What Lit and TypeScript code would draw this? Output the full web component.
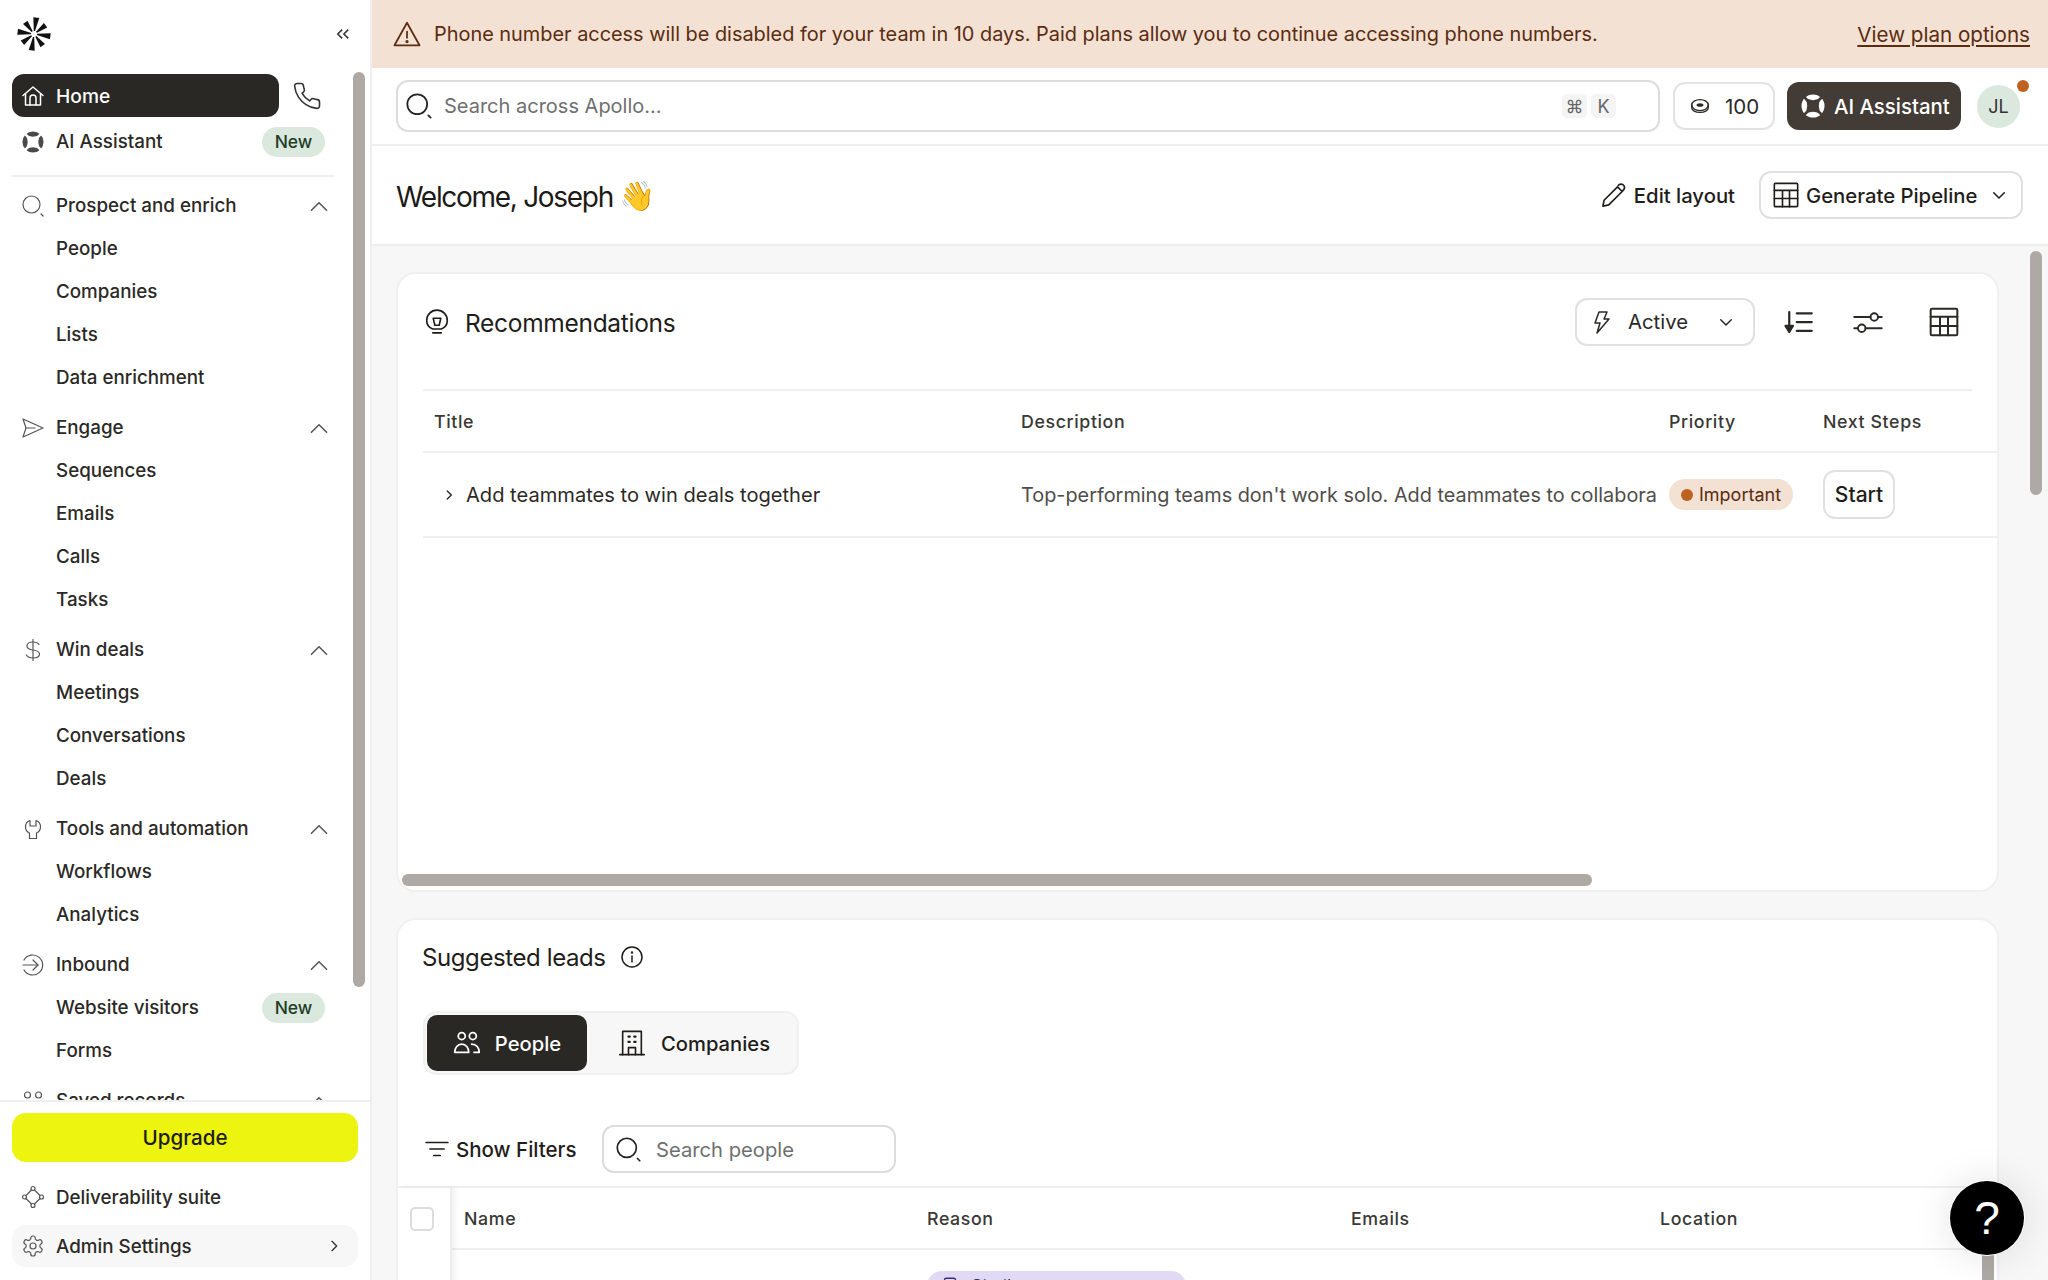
import { LitElement, html, css, svg } from "lit";
import { customElement } from "lit/decorators.js";

const ic = (size: number, body: unknown, sw = 1.5) => html`<svg class="ic" width=${size} height=${size} viewBox="0 0 24 24" fill="none" stroke="currentColor" stroke-width=${sw} stroke-linecap="round" stroke-linejoin="round">${body}</svg>`;

const I = {
  home: svg`<path d="M2 11.500 12 3l10 8.500"/><path d="M4.500 10v11h15V10"/><path d="M9 21v-7a3 3 0 0 1 6 0v7"/>`,
  phone: svg`<path d="M22 16.920v3a2 2 0 0 1-2.180 2 19.790 19.790 0 0 1-8.630-3.070 19.500 19.500 0 0 1-6-6 19.790 19.790 0 0 1-3.070-8.670A2 2 0 0 1 4.110 2h3a2 2 0 0 1 2 1.720 12.840 12.840 0 0 0 .7 2.810 2 2 0 0 1-.45 2.110L8.090 9.910a16 16 0 0 0 6 6l1.270-1.270a2 2 0 0 1 2.110-.45 12.840 12.840 0 0 0 2.810.7A2 2 0 0 1 22 16.920z"/>`,
  search: svg`<circle cx="10.500" cy="10.500" r="8.500"/><path d="M20 20l2 2"/>`,
  send: svg`<path d="M2 3l20 9-20 9 3-9z"/><path d="M5 12h9"/>`,
  dollar: svg`<path d="M12 1.500v21"/><path d="M18 6.500c-1-1.500-3-2.500-6-2.500-3.500 0-6 1.500-6 4s2.500 3.500 6 4 6.500 1.500 6.500 4-2.500 4-6.500 4c-3 0-5.500-1-6.500-3"/>`,
  tool: svg`<path d="M9 3.500C6 4.500 4.500 7 4.500 10c0 3 1.500 5 4 6v5.500h7V16c2.500-1 4-3 4-6 0-3-1.500-5.500-4.500-6.500V9H9z"/>`,
  inbound: svg`<path d="M3 7a10 10 0 1 1 0 10"/><path d="M2 12h15"/><path d="M12 7l5 5-5 5"/>`,
  saved: svg`<circle cx="6.500" cy="6" r="3"/><circle cx="17.500" cy="6" r="3"/>`,
  up: svg`<path d="M5 16l7-7 7 7"/>`,
  down: svg`<path d="M5 9l7 7 7-7"/>`,
  right: svg`<path d="M9 5l7 7-7 7"/>`,
  warn: svg`<path d="M12 3 2 21h20z"/><path d="M12 10v5"/><circle cx="12" cy="18" r=".6" fill="currentColor"/>`,
  coin: svg`<ellipse cx="12" cy="11" rx="9" ry="6"/><path d="M3 11v3c0 3 4 5 9 5s9-2 9-5v-3"/><ellipse cx="12" cy="11" rx="3" ry="1.200" fill="currentColor"/>`,
  pencil: svg`<path d="M2.500 21.500l1-5L15 5l4 4L7.500 20.500z"/><path d="M15.500 4a3 3 0 0 1 5 0c1 1.500 .5 3-1 4.500"/>`,
  table: svg`<rect x="2" y="2" width="20" height="20" rx="1"/><path d="M2 8h20M2 15h20M9 8v14M15 8v14"/>`,
  bolt: svg`<path d="M9 2h8l-3 7h5L7 23l3-10H5z"/>`,
  sort: svg`<path d="M5 4v15"/><path d="M2 15l3 5 3-5z" fill="currentColor"/><path d="M11 5h12M11 12h12M11 19h12"/>`,
  sliders: svg`<path d="M1 8h13M20 8h3M1 17h3M10 17h13"/><circle cx="17" cy="8" r="3"/><circle cx="7" cy="17" r="3"/>`,
  bulb: svg`<path d="M8 18.500C4.500 17 2.500 14 2.500 10.500a9.500 9.500 0 0 1 19 0c0 3.500-2 6.500-5.500 8z"/><path d="M8.500 8.500h7L14 15h-4z"/><path d="M8 22h8"/>`,
  info: svg`<circle cx="12" cy="12" r="10"/><path d="M12 11v6"/><circle cx="12" cy="7.500" r=".5" fill="currentColor"/>`,
  people: svg`<circle cx="7.500" cy="6" r="3"/><circle cx="17" cy="6" r="3"/><path d="M1.500 20c0-4 2.500-7 6-7s6 3 6 7z"/><path d="M16 13c4 0 6.500 3 6.500 7H18"/>`,
  building: svg`<path d="M4 22V2h16v20"/><path d="M1.500 22h21"/><path d="M9 22v-6h6v6"/><path d="M9 6.500h1M14 6.500h1M9 11h1M14 11h1" stroke-width="2"/>`,
  filter: svg`<path d="M2 6h20M5.500 12h13M9 18h6"/>`,
  deliver: svg`<circle cx="12" cy="3.500" r="2"/><circle cx="3.500" cy="12" r="2"/><circle cx="20.500" cy="12" r="2"/><circle cx="12" cy="20.500" r="2"/><path d="M10.500 5 5 10.500M13.500 5l5.500 5.500M5 13.500l5.500 5.500M19 13.500 13.500 19"/>`,
  gear: svg`<circle cx="12" cy="12" r="3"/><path d="M12.220 2h-.44a2 2 0 0 0-2 2v.18a2 2 0 0 1-1 1.730l-.43.25a2 2 0 0 1-2 0l-.15-.08a2 2 0 0 0-2.730.73l-.22.38a2 2 0 0 0 .73 2.730l.15.1a2 2 0 0 1 1 1.720v.51a2 2 0 0 1-1 1.740l-.15.09a2 2 0 0 0-.73 2.730l.22.38a2 2 0 0 0 2.730.73l.15-.08a2 2 0 0 1 2 0l.43.25a2 2 0 0 1 1 1.730V20a2 2 0 0 0 2 2h.44a2 2 0 0 0 2-2v-.18a2 2 0 0 1 1-1.730l.43-.25a2 2 0 0 1 2 0l.15.08a2 2 0 0 0 2.730-.73l.22-.39a2 2 0 0 0-.73-2.730l-.15-.08a2 2 0 0 1-1-1.740v-.5a2 2 0 0 1 1-1.740l.15-.09a2 2 0 0 0 .73-2.730l-.22-.38a2 2 0 0 0-2.730-.73l-.15.08a2 2 0 0 1-2 0l-.43-.25a2 2 0 0 1-1-1.730V4a2 2 0 0 0-2-2z"/>`,
  badge: svg`<rect x="3" y="9" width="18" height="12" rx="2.500"/><path d="M6 9V5.500a2 2 0 0 1 2-2h8a2 2 0 0 1 2 2V9"/>`,
};

const ball = (size: number, color: string, bg: string) => html`<svg class="ic" width=${size} height=${size} viewBox="0 0 24 24">
  <circle cx="12" cy="12" r="11.500" fill=${color}/>
  <path d="M3 3 Q12 9.500 21 3 Q14.500 12 21 21 Q12 14.500 3 21 Q9.500 12 3 3Z" fill=${bg}/>
  <path d="M1 1 23 23M23 1 1 23" stroke=${bg} stroke-width="2.600"/>
</svg>`;

const logo = html`<svg class="ic" width="34" height="34" viewBox="0 0 34 34" fill="#111" stroke="none">
  ${[0, 45, 90, 135, 180, 225, 270, 315].map((a, i) => svg`<path transform="rotate(${a + 8} 17 17)" d=${i % 2 ? "M16.400 14 L14.200 2.500 L19.800 2.500 L17.600 14 Z" : "M16.400 14 L14 0.500 L20 0.500 L17.600 14 Z"}/>`)}
</svg>`;

type Sec = { icon: unknown; label: string; items: { t: string; badge?: boolean }[] };
const secs: Sec[] = [
  { icon: I.search, label: "Prospect and enrich", items: [{ t: "People" }, { t: "Companies" }, { t: "Lists" }, { t: "Data enrichment" }] },
  { icon: I.send, label: "Engage", items: [{ t: "Sequences" }, { t: "Emails" }, { t: "Calls" }, { t: "Tasks" }] },
  { icon: I.dollar, label: "Win deals", items: [{ t: "Meetings" }, { t: "Conversations" }, { t: "Deals" }] },
  { icon: I.tool, label: "Tools and automation", items: [{ t: "Workflows" }, { t: "Analytics" }] },
  { icon: I.inbound, label: "Inbound", items: [{ t: "Website visitors", badge: true }, { t: "Forms" }] },
  { icon: I.saved, label: "Saved records", items: [] },
];

@customElement("app-root")
export class AppRoot extends LitElement {
  static styles = css`
    :host { display: flex; width: 2048px; height: 1280px; overflow: hidden; background: #fff; font-family: Inter, "Liberation Sans", sans-serif; color: #1f1d1a; font-size: 18.8px; position: relative; }
    .ic { display: block; flex: none; }
    .side { width: 370px; flex: none; border-right: 2px solid #efefef; height: 1280px; display: flex; flex-direction: column; position: relative; }
    .logo-row { height: 68px; flex: none; display: flex; align-items: center; justify-content: space-between; padding: 0 20px 0 17px; box-sizing: border-box; }
    .nav { height: 1032px; flex: none; overflow: hidden; padding: 6px 0 0 12px; box-sizing: border-box; }
    .home-row { display: flex; align-items: center; height: 43px; }
    .home { width: 267px; height: 43px; background: #2a2824; border-radius: 12px; color: #fff; display: flex; align-items: center; gap: 11px; padding-left: 9px; box-sizing: border-box; font-weight: 500; font-size: 19.2px; }
    .phone { margin-left: 13px; color: #333; }
    .row { display: flex; align-items: center; height: 43px; width: 320px; padding-left: 9px; box-sizing: border-box; gap: 11px; color: #2b2926; font-weight: 450; }
    .row .sic { color: #555; width: 24px; display: flex; justify-content: center; flex: none; }
    .row .lbl { flex: 1; white-space: nowrap; }
    .ai { margin-top: 3px; }
    .badge { background: #dbe8dd; color: #1f3d27; border-radius: 15px; height: 30px; width: 63px; margin-right: 7px; display: flex; align-items: center; justify-content: center; font-size: 17.5px; font-weight: 500; flex: none; }
    .divider { width: 322px; border-top: 2px solid #efefef; margin: 12px 0 7px 0; }
    .sec { margin-bottom: 7px; }
    .item { padding-left: 44px; }
    .chev { color: #555; }
    .foot { border-top: 2px solid #efefef; flex: 1; padding: 11px 12px 0; display: flex; flex-direction: column; }
    .upgrade { height: 49px; border-radius: 14px; background: #ecf40f; display: flex; align-items: center; justify-content: center; font-weight: 500; flex: none; font-size: 20.6px; }
    .foot .row { width: 346px; height: 42px; }
    .foot .deliver { margin-top: 14px; }
    .foot .admin { margin-top: 7px; background: #f7f7f7; border-radius: 14px; padding-right: 16px; }
    .foot .row .end { color: #333; }
    .sb { position: absolute; background: #aea9a4; border-radius: 6px; }
    .sb.nav-sb { left: 353px; top: 72px; width: 12px; height: 915px; }
    .main { flex: 1; min-width: 0; display: flex; flex-direction: column; position: relative; height: 1280px; overflow: hidden; }
    .banner { height: 68px; flex: none; background: #f3e1d3; color: #5a2c10; display: flex; align-items: center; padding: 0 18px 0 20px; box-sizing: border-box; gap: 12px; font-size: 19.9px; }
    .banner .msg { flex: 1; white-space: nowrap; }
    .banner a { text-decoration: underline; text-underline-offset: 3px; font-size: 20.6px; }
    .top { height: 78px; flex: none; border-bottom: 2px solid #efefef; box-sizing: border-box; display: flex; align-items: center; padding: 0 26px 0 24px; }
    .sbox { width: 1264px; height: 52px; border: 2px solid #dcdcdc; border-radius: 12px; box-sizing: border-box; display: flex; align-items: center; padding: 0 42px 0 7px; gap: 11px; color: #222; flex: none; }
    .sbox .ph { flex: 1; color: #6f6f6f; font-size: 20px; }
    .kbd { background: #f4f4f4; border-radius: 5px; width: 25px; height: 24px; display: flex; align-items: center; justify-content: center; font-size: 18px; color: #666; margin-left: -7px; }
    .credits { margin-left: 13px; width: 102px; height: 48px; border: 2px solid #e3e3e3; border-radius: 12px; box-sizing: border-box; display: flex; align-items: center; justify-content: center; gap: 14px; flex: none; color: #2b2926; font-size: 20.5px; }
    .aibtn { margin-left: 12px; width: 174px; height: 48px; background: #423b36; color: #fff; border-radius: 12px; display: flex; align-items: center; gap: 9px; padding-left: 14px; box-sizing: border-box; flex: none; font-weight: 500; font-size: 20.4px; white-space: nowrap; }
    .avatar { margin-left: 16px; width: 43px; height: 43px; border-radius: 50%; background: #dbe8dd; display: flex; align-items: center; justify-content: center; font-size: 18px; color: #333; position: relative; flex: none; }
    .dot { position: absolute; top: -5px; right: -9px; width: 12px; height: 12px; border-radius: 50%; background: #c0621f; }
    .welcome { height: 100px; flex: none; border-bottom: 2px solid #efefef; box-sizing: border-box; display: flex; align-items: center; padding: 0 25px 0 24px; }
    .welcome h1 { font-size: 28px; font-weight: 400; margin: 4px 0 0; flex: 1; letter-spacing: -1.3px; color: #1c1a17; display: flex; align-items: center; }
    .wave { font-size: 29px; letter-spacing: 0; margin: -4px 0 0 6px; }
    .edit { display: flex; align-items: center; gap: 6px; font-weight: 500; margin-right: 24px; font-size: 20.3px; }
    .gen { width: 264px; height: 48px; border: 2px solid #e0e0e0; border-radius: 12px; box-sizing: border-box; display: flex; align-items: center; gap: 6px; padding-left: 11px; font-weight: 500; font-size: 20.3px; white-space: nowrap; }
    .gen .c { margin-left: 7px; }
    .content { flex: 1; background: #f7f7f7; padding: 26px 0 0 24px; overflow: hidden; display: flex; flex-direction: column; gap: 26px; }
    .card { width: 1603px; background: #fff; border: 2px solid #f0f0f0; border-radius: 20px; box-sizing: border-box; flex: none; position: relative; overflow: hidden; }
    .card.rec { height: 620px; }
    .card.leads { height: 400px; }
    .rec-head { height: 117px; width: 1549px; margin-left: 25px; border-bottom: 2px solid #efefef; box-sizing: border-box; display: flex; align-items: center; padding: 0 0 20px 1px; }
    .rec-head .t { font-size: 24.5px; font-weight: 400; flex: 1; margin: 2px 0 0 15px; letter-spacing: -0.3px; }
    .active { width: 180px; height: 48px; border: 2px solid #e0e0e0; border-radius: 12px; box-sizing: border-box; display: flex; align-items: center; padding: 0 18px 0 13px; gap: 14px; font-size: 20.3px; margin-right: 28px; color: #2b2926; }
    .active span { flex: 1; }
    .tool { color: #2b2926; }
    .tool.a { margin-right: 40px; }
    .tool.b { margin-right: 45px; }
    .tool.c { margin-right: 12px; }
    .grid { display: grid; align-items: center; }
    .rec-grid { grid-template-columns: 587px 648px 154px 1fr; }
    .th { font-size: 17.8px; font-weight: 500; letter-spacing: 0.6px; color: #3a3835; white-space: nowrap; }
    .rhead { height: 62px; margin-left: 25px; border-bottom: 2px solid #efefef; padding-left: 11px; box-sizing: border-box; }
    .rrow { height: 85px; margin-left: 25px; border-bottom: 2px solid #efefef; padding-left: 11px; box-sizing: border-box; font-size: 20.1px; }
    .rrow .ti { display: flex; align-items: center; gap: 10px; color: #2b2926; padding-left: 8px; white-space: nowrap; }
    .rrow .desc { white-space: nowrap; color: #4f4d4a; font-size: 19.85px; }
    .pill { display: inline-flex; align-items: center; gap: 6px; background: #f3e1d3; color: #5a2c10; height: 31px; width: 124px; border-radius: 16px; box-sizing: border-box; padding-left: 12px; font-size: 18px; }
    .pill i { width: 12px; height: 12px; border-radius: 50%; background: #c0621f; }
    .start { width: 72px; height: 49px; border: 2px solid #e0e0e0; border-radius: 12px; box-sizing: border-box; display: flex; align-items: center; justify-content: center; font-weight: 500; font-size: 21px; }
    .hsb { left: 4px; bottom: 4px; width: 1190px; height: 12px; }
    .vsb { left: 1658px; top: 251px; width: 12px; height: 244px; }
    .lhead { height: 74px; display: flex; align-items: center; padding-left: 24px; gap: 14px; }
    .lhead .t { font-size: 24px; letter-spacing: -0.4px; }
    .toggle { margin: 17px 0 0 25px; width: 376px; height: 64px; border: 2px solid #f0f0f0; background: #f7f7f7; border-radius: 14px; box-sizing: border-box; display: flex; align-items: center; padding-left: 2px; }
    .tg { height: 56px; display: flex; align-items: center; font-weight: 500; gap: 14px; font-size: 20.2px; }
    .tg.on { width: 160px; background: #2a2824; color: #fff; border-radius: 10px; justify-content: center; }
    .tg.off { margin-left: 31px; gap: 15px; }
    .filters { display: flex; align-items: center; height: 48px; margin-top: 50px; padding-left: 26px; gap: 6px; }
    .filters .sf { font-weight: 500; font-size: 20.5px; width: 140px; white-space: nowrap; }
    .sp { width: 294px; height: 48px; border: 2px solid #dcdcdc; border-radius: 12px; box-sizing: border-box; display: flex; align-items: center; gap: 14px; padding-left: 11px; color: #222; }
    .sp span { color: #6f6f6f; font-size: 20.2px; }
    .lgrid { position: relative; margin-top: 13px; border-top: 2px solid #efefef; }
    .lh { height: 62px; border-bottom: 2px solid #efefef; box-sizing: border-box; grid-template-columns: 463px 424px 309px 1fr; padding-left: 66px; }
    .lb { height: 40px; grid-template-columns: 463px 1fr; padding-left: 66px; align-items: start; padding-top: 21px; box-sizing: border-box; }
    .sticky { position: absolute; left: 0; top: 0; bottom: 0; width: 54px; border-right: 2px solid #eee; box-shadow: 3px 0 5px rgba(0,0,0,.06); display: flex; justify-content: center; box-sizing: border-box; padding: 19px 4px 0 0; background: #fff; }
    .check { width: 24px; height: 24px; border: 2px solid #dcdcdc; border-radius: 5px; box-sizing: border-box; }
    .reason { width: 259px; height: 30px; border-radius: 15px; background: #e0daf5; color: #3d2d70; display: flex; align-items: center; gap: 10px; padding-left: 12px; font-size: 18px; box-sizing: border-box; }
    .lsb { left: 1982px; top: 1255px; width: 12px; height: 40px; border-radius: 0; }
    .help { position: absolute; left: 1950px; top: 1181px; width: 74px; height: 74px; border-radius: 50%; background: #000; color: #fff; display: flex; align-items: center; justify-content: center; font-size: 46px; box-shadow: 0 0 0 1px #fff, 0 0 40px rgba(0,0,0,.12); font-family: "Liberation Sans", sans-serif; }
  `;

  render() {
    return html`
      <aside class="side">
        <div class="logo-row">${logo}<svg class="ic" width="14" height="14" viewBox="0 0 16 16" fill="none" stroke="#333" stroke-width="1.700"><path d="M7 3 2 8l5 5M14 3 9 8l5 5"/></svg></div>
        <div class="nav">
          <div class="home-row"><div class="home">${ic(24, I.home)}<span>Home</span></div><span class="phone">${ic(30, I.phone, 1.3)}</span></div>
          <div class="row ai"><span class="sic">${ball(22, "#4a4a4a", "#fff")}</span><span class="lbl">AI Assistant</span><span class="badge">New</span></div>
          <div class="divider"></div>
          ${secs.map((s) => html`<div class="sec">
            <div class="row"><span class="sic">${ic(24, s.icon, 1.2)}</span><span class="lbl">${s.label}</span><span class="chev">${ic(26, I.up, 1.4)}</span></div>
            ${s.items.map((it) => html`<div class="row item"><span class="lbl">${it.t}</span>${it.badge ? html`<span class="badge">New</span>` : ""}</div>`)}
          </div>`)}
        </div>
        <div class="foot">
          <div class="upgrade">Upgrade</div>
          <div class="row deliver"><span class="sic">${ic(24, I.deliver, 1.2)}</span><span class="lbl">Deliverability suite</span></div>
          <div class="row admin"><span class="sic">${ic(24, I.gear, 1.2)}</span><span class="lbl">Admin Settings</span><span class="end">${ic(16, I.right, 2)}</span></div>
        </div>
        <div class="sb nav-sb"></div>
      </aside>
      <main class="main">
        <div class="banner">${ic(30, I.warn, 1.4)}<span class="msg">Phone number access will be disabled for your team in 10 days. Paid plans allow you to continue accessing phone numbers.</span><a>View plan options</a></div>
        <div class="top">
          <div class="sbox">${ic(28, I.search)}<span class="ph">Search across Apollo...</span><span class="kbd">⌘</span><span class="kbd">K</span></div>
          <div class="credits">${ic(22, I.coin)}<span>100</span></div>
          <div class="aibtn">${ball(24, "#fff", "#423b36")}<span>AI Assistant</span></div>
          <div class="avatar">JL<span class="dot"></span></div>
        </div>
        <div class="welcome">
          <h1>Welcome, Joseph<span class="wave">👋</span></h1>
          <div class="edit">${ic(28, I.pencil, 1.4)}<span>Edit layout</span></div>
          <div class="gen">${ic(28, I.table, 1.4)}<span>Generate Pipeline</span><span class="c">${ic(18, I.down, 2)}</span></div>
        </div>
        <div class="content">
          <section class="card rec">
            <div class="rec-head">
              ${ic(26, I.bulb)}<span class="t">Recommendations</span>
              <div class="active">${ic(24, I.bolt)}<span>Active</span>${ic(18, I.down, 2)}</div>
              <span class="tool a">${ic(30, I.sort, 1.8)}</span>
              <span class="tool b">${ic(30, I.sliders, 1.5)}</span>
              <span class="tool c">${ic(32, I.table, 1.5)}</span>
            </div>
            <div class="grid rec-grid rhead"><span class="th">Title</span><span class="th">Description</span><span class="th">Priority</span><span class="th">Next Steps</span></div>
            <div class="grid rec-grid rrow">
              <span class="ti">${ic(14, I.right, 2.4)}<span>Add teammates to win deals together</span></span>
              <span class="desc">Top-performing teams don't work solo. Add teammates to collabora</span>
              <span><span class="pill"><i></i>Important</span></span>
              <span class="start">Start</span>
            </div>
            <div class="sb hsb"></div>
          </section>
          <section class="card leads">
            <div class="lhead"><span class="t">Suggested leads</span>${ic(24, I.info, 1.5)}</div>
            <div class="toggle">
              <div class="tg on">${ic(28, I.people, 1.5)}<span>People</span></div>
              <div class="tg off">${ic(28, I.building, 1.4)}<span>Companies</span></div>
            </div>
            <div class="filters">${ic(26, I.filter, 1.6)}<span class="sf">Show Filters</span>
              <div class="sp">${ic(27, I.search)}<span>Search people</span></div>
            </div>
            <div class="lgrid">
              <div class="grid lh"><span class="th">Name</span><span class="th">Reason</span><span class="th">Emails</span><span class="th">Location</span></div>
              <div class="grid lb"><span></span><div class="reason">${ic(22, I.badge)}<span>Similar</span></div></div>
              <div class="sticky"><span class="check"></span></div>
            </div>
          </section>
        </div>
        <div class="sb vsb"></div>
      </main>
      <div class="sb lsb"></div>
      <div class="help">?</div>
    `;
  }
}
